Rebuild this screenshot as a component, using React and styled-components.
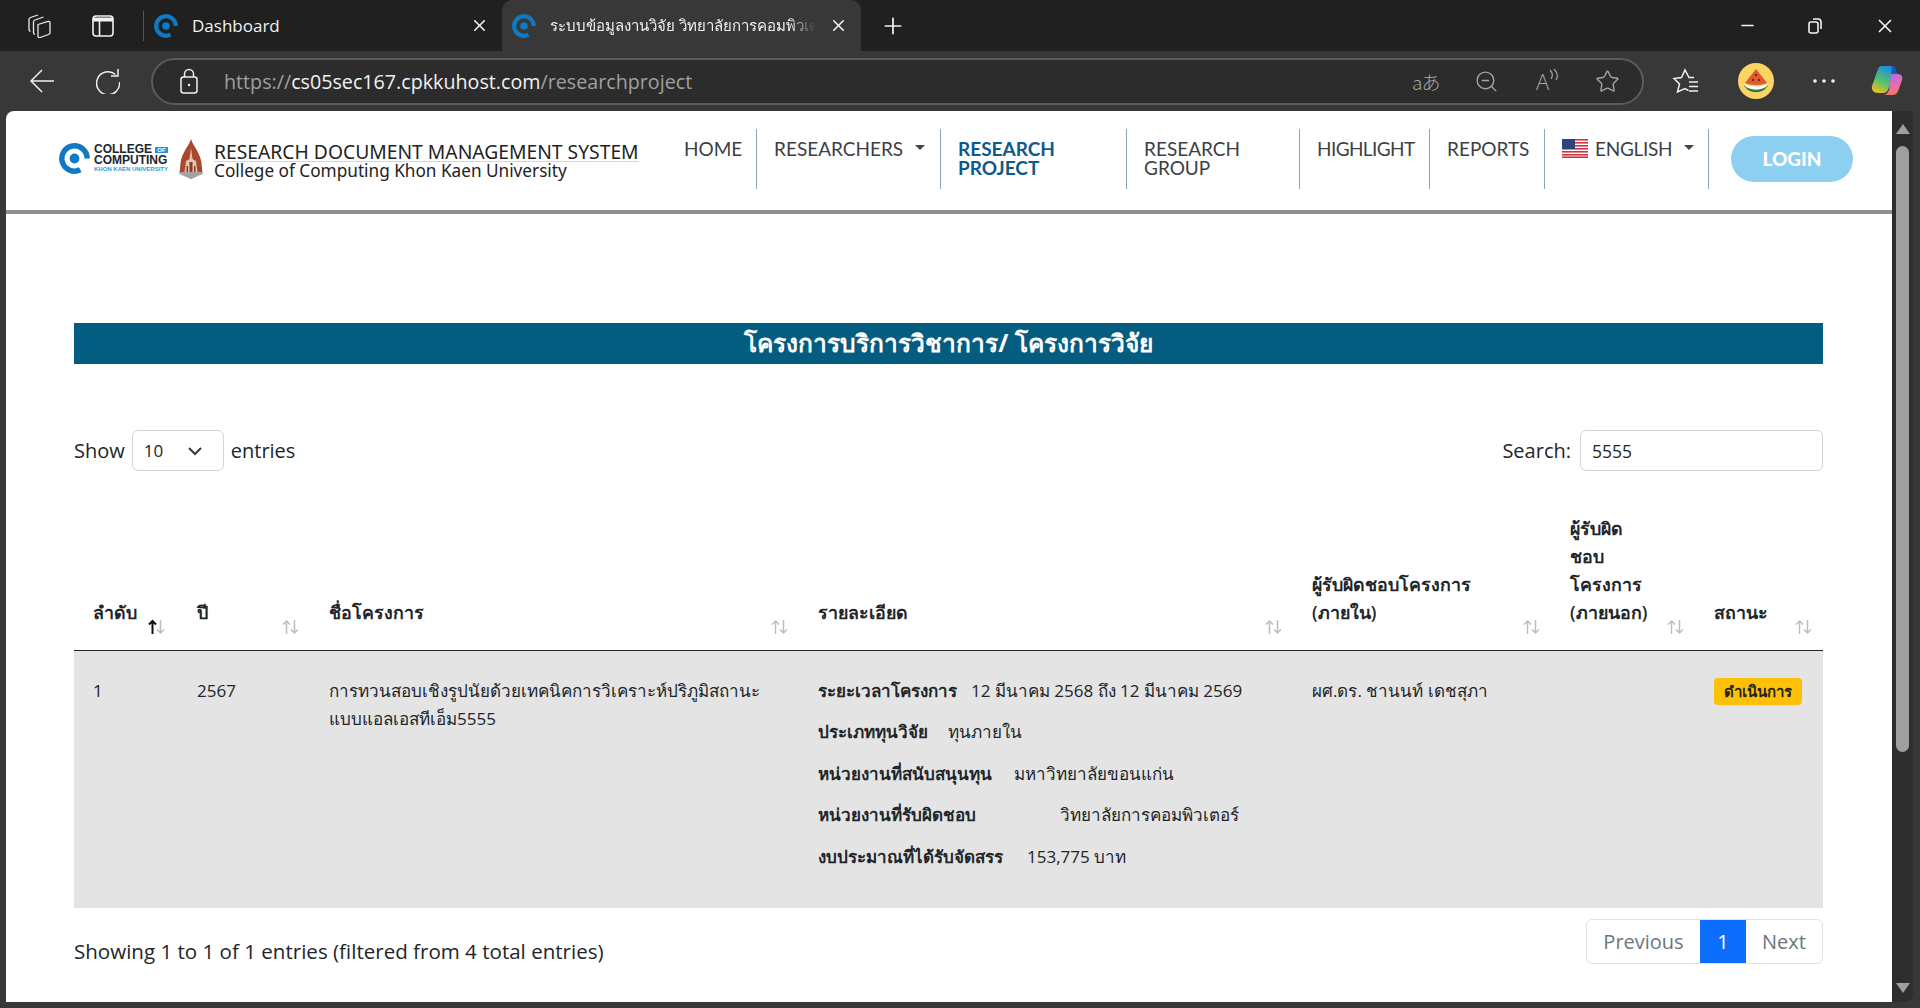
import React from 'react';
import styled, { createGlobalStyle } from 'styled-components';
import { Plus, X, Minus, Star, ZoomOut } from 'lucide-react';

const GlobalStyle = createGlobalStyle`
    html, body { margin: 0; padding: 0; background: #383838; }
    * { box-sizing: border-box; }
    body { font-family: "Open Sans", "Noto Sans", sans-serif; }
`;

const Mark = function Mark({ size = 24 }) {
    return (
        <svg width={size} height={size} viewBox="0 0 24 24" fill="none">
            <path d="M21.800 12 A9.800 9.800 0 1 0 16.500 20.700" stroke="#0f79c4" strokeWidth="4.200" />
            <circle cx="12" cy="12" r="3.800" fill="#0f79c4" />
        </svg>
    );
};

const Emblem = function Emblem() {
    return (
        <svg width="24" height="40" viewBox="0 0 24 40">
            <path d="M12 0 C14 7 21 13 22.500 24 L23.500 34 L12 40 L0.500 34 L1.500 24 C3 13 10 7 12 0Z" fill="#a9492c" />
            <path d="M12 9 L13.500 20 L17 22 L18.500 33 L5.500 33 L7 22 L10.500 20Z" fill="#dcc3b4" />
            <path d="M10.500 23h3v10h-3zM7.500 27h1.500v6H7.500zM15 27h1.500v6H15z" fill="#8a3c25" />
            <path d="M0.500 33 L23.500 33 L23.500 35 L12 40 L0.500 35Z" fill="#a3a3a3" />
        </svg>
    );
};

const Flag = function Flag() {
    return (
        <svg width="26" height="19" viewBox="0 0 26 19">
            <rect width="26" height="19" fill="#fff" />
            {[0, 3, 6, 9, 12, 15].map((y) => <rect key={y} y={y} width="26" height="1.600" fill="#d0343f" />)}
            <rect y="17.400" width="26" height="1.600" fill="#d0343f" />
            <rect width="13" height="10" fill="#33407c" />
        </svg>
    );
};

const SortIcon = function SortIcon({ active }) {
    return (
        <svg width="19" height="16" viewBox="0 0 19 16" fill="none">
            <path d="M5.500 15V2M2 5.500l3.500-3.500 3.500 3.500" stroke={active ? '#111' : '#bdbdbd'} strokeWidth={active ? 2 : 1.500} />
            <path d="M13.500 1v13M10 10.500l3.500 3.500 3.500-3.500" stroke="#bdbdbd" strokeWidth="1.500" />
        </svg>
    );
};

const columns = [
    { title: 'ลำดับ', width: 104, active: true },
    { title: 'ปี', width: 132 },
    { title: 'ชื่อโครงการ', width: 489 },
    { title: 'รายละเอียด', width: 494 },
    { title: <>ผู้รับผิดชอบโครงการ<br />(ภายใน)</>, width: 258 },
    { title: <>ผู้รับผิด<br />ชอบ<br />โครงการ<br />(ภายนอก)</>, width: 144 },
    { title: 'สถานะ', width: 128 },
];

const details = [
    { label: 'ระยะเวลาโครงการ', value: '12 มีนาคม 2568 ถึง 12 มีนาคม 2569', width: 153 },
    { label: 'ประเภททุนวิจัย', value: 'ทุนภายใน', width: 130 },
    { label: 'หน่วยงานที่สนับสนุนทุน', value: 'มหาวิทยาลัยขอนแก่น', width: 196 },
    { label: 'หน่วยงานที่รับผิดชอบ', value: 'วิทยาลัยการคอมพิวเตอร์', width: 242 },
    { label: 'งบประมาณที่ได้รับจัดสรร', value: '153,775 บาท', width: 209 },
];

const navItems = [
    { label: 'HOME', width: 90 },
    { label: 'RESEARCHERS', width: 184, caret: true },
    { label: <>RESEARCH<br />PROJECT</>, width: 186, current: true },
    { label: <>RESEARCH<br />GROUP</>, width: 173 },
    { label: 'HIGHLIGHT', width: 130, tracking: -0.6 },
    { label: 'REPORTS', width: 115 },
    { label: 'ENGLISH', width: 164, caret: true, flag: true, tracking: -0.3 },
];

const App = function App() {
    return (
        <Window>
            <GlobalStyle />
            <TabBar>
                <Workspaces>
                    <svg width="24" height="24" viewBox="0 0 24 24" fill="none" stroke="#e8e8e8" strokeWidth="1.300">
                        <path d="M11 10.500 L21 7.500 Q23 7 23 9 V18.500 Q23 20 21.500 20.500 L13 23.500 Q11 24 11 22 Z" />
                        <path d="M8 20.500 Q6.500 20 6.500 18.500 V8 Q6.500 6.500 8 6 L16.500 3" />
                        <path d="M3.500 17.500 Q2 17 2 15.500 V5.500 Q2 4 3.500 3.500 L11 1" />
                    </svg>
                </Workspaces>
                <VerticalTabs>
                    <svg width="22" height="22" viewBox="0 0 22 22" fill="none" stroke="#f2f2f2" strokeWidth="1.600">
                        <rect x="1" y="1" width="20" height="20" rx="3" />
                        <path d="M1 4.500h20" strokeWidth="4" />
                        <path d="M7.500 5v16" />
                    </svg>
                </VerticalTabs>
                <TabDivider />
                <Tab>
                    <Mark size={24} />
                    <TabTitle>Dashboard</TabTitle>
                    <X size={19} color="#f2f2f2" />
                </Tab>
                <Tab $active>
                    <Mark size={24} />
                    <TabTitle $thai>ระบบข้อมูลงานวิจัย วิทยาลัยการคอมพิวเตอร์</TabTitle>
                    <X size={19} color="#f2f2f2" />
                </Tab>
                <NewTab><Plus size={26} color="#f2f2f2" strokeWidth={1.600} /></NewTab>
                <WindowButtons>
                    <Minus size={19} color="#f2f2f2" />
                    <svg width="19" height="19" viewBox="0 0 19 19" fill="none" stroke="#f2f2f2" strokeWidth="1.600">
                        <rect x="3" y="6" width="9" height="11" rx="2" />
                        <path d="M7 3h5a3 3 0 0 1 3 3v7" />
                    </svg>
                    <X size={22} color="#f2f2f2" strokeWidth={1.800} />
                </WindowButtons>
            </TabBar>

            <Toolbar>
                <BackIcon>
                    <svg width="24" height="24" viewBox="0 0 24 24" fill="none" stroke="#f0f0f0" strokeWidth="1.500">
                        <path d="M24 12H1M12 1 1 12l11 11" />
                    </svg>
                </BackIcon>
                <svg width="24" height="26" viewBox="0 0 24 26" fill="none" stroke="#f0f0f0" strokeWidth="1.500">
                    <path d="M19.500 6.500A11.500 11.500 0 1 0 23.500 14" />
                    <path d="M22 1v7h-7" />
                </svg>
                <AddressBar>
                    <svg width="18" height="26" viewBox="0 0 18 26" fill="none" stroke="#f0f0f0" strokeWidth="1.500">
                        <rect x="1" y="9" width="16" height="16" rx="2.500" />
                        <path d="M4.500 9V6a4.500 4.500 0 0 1 9 0v3" />
                        <circle cx="9" cy="17" r="1.200" fill="#f0f0f0" stroke="none" />
                    </svg>
                    <Url>https://<b>cs05sec167.cpkkuhost.com</b>/researchproject</Url>
                    <AddressIcons>
                        <TranslateGlyph>aあ</TranslateGlyph>
                        <ZoomOut size={25} color="#a6a6a6" strokeWidth={1.300} />
                        <ReadGlyph>A<svg width="10" height="14" viewBox="0 0 10 14" fill="none" stroke="#a6a6a6" strokeWidth="1.200"><path d="M1 1c3 3 3 6 1 9M5 0c4 4 4 8 2 11" /></svg></ReadGlyph>
                        <Star size={25} color="#a6a6a6" strokeWidth={1.300} />
                    </AddressIcons>
                </AddressBar>
                <RightTools>
                    <svg width="28" height="28" viewBox="0 0 28 28" fill="none" stroke="#f0f0f0" strokeWidth="1.500">
                        <path d="M22 10.500H17L13 3 9.500 10.500 2 11.500 7.500 17 5.500 25 13 21.500 16.500 23.500" />
                        <path d="M17 15h9M17 19.500h9M17 24h9" />
                    </svg>
                    <Avatar>
                        <svg width="30" height="30" viewBox="0 0 30 30">
                            <path d="M15 3 26 17c-5 2.500-17 2.500-22 0Z" fill="#e2592b" />
                            <path d="M2.500 17.500c4 9 21 9 25 0c-6 4-19 4-25 0Z" fill="#fff" />
                            <path d="M2.500 18c4 11 21 11 25 0c-4 7.500-21 7.500-25 0Z" fill="#237a3d" />
                            <circle cx="15" cy="9" r="1" fill="#222" /><circle cx="12" cy="14" r="1" fill="#222" /><circle cx="18" cy="14" r="1" fill="#222" />
                        </svg>
                    </Avatar>
                    <svg width="24" height="6" viewBox="0 0 24 6" fill="#f0f0f0">
                        <circle cx="3" cy="3" r="1.800" /><circle cx="12" cy="3" r="1.800" /><circle cx="21" cy="3" r="1.800" />
                    </svg>
                    <CopilotIcon width="34" height="34" viewBox="0 0 34 34" fill="none">
                        <defs>
                            <linearGradient id="cpA" x1="0.600" y1="0" x2="0.200" y2="1"><stop offset="0" stopColor="#1c8fe0" /><stop offset=".55" stopColor="#52c26b" /><stop offset="1" stopColor="#f5c21b" /></linearGradient>
                            <linearGradient id="cpB" x1="0.300" y1="0" x2="0.700" y2="1"><stop offset="0" stopColor="#a96ae6" /><stop offset=".6" stopColor="#e86fb0" /><stop offset="1" stopColor="#f4793f" /></linearGradient>
                        </defs>
                        <path d="M12 2h10c2 0 3 1 3.500 3L18 26c-1 2-2.500 3-4.500 3H8C4 29 1 26 2 22L8 5c.5-2 2-3 4-3Z" fill="url(#cpA)" />
                        <path d="M22 2c2 0 3 1 3.500 3L28 11h-7Z" fill="#1a56c4" />
                        <path d="M21 10h7c3.500 0 5 3 4 6l-3.500 10c-1 3-3 5-6 5H13c3 0 5-2 6-5Z" fill="url(#cpB)" />
                    </CopilotIcon>
                </RightTools>
            </Toolbar>

            <Viewport>
                <Page>
                    <Navbar>
                        <Brand>
                            <CollegeLogo>
                                <Mark size={31} />
                                <CollegeText>
                                    <span>COLLEGE <Of>OF</Of></span>
                                    <span>COMPUTING</span>
                                    <small>KHON KAEN UNIVERSITY</small>
                                </CollegeText>
                            </CollegeLogo>
                            <Emblem />
                            <BrandText>
                                <BrandTitle>RESEARCH DOCUMENT MANAGEMENT SYSTEM</BrandTitle>
                                <BrandSub>College of Computing Khon Kaen University</BrandSub>
                            </BrandText>
                        </Brand>
                        <NavList>
                            {navItems.map((item, i) => (
                                <NavItem key={i} $width={item.width} $current={item.current} $tracking={item.tracking}>
                                    {item.flag && <Flag />}
                                    <span>{item.label}</span>
                                    {item.caret && <Caret />}
                                </NavItem>
                            ))}
                        </NavList>
                        <LoginButton>LOGIN</LoginButton>
                    </Navbar>

                    <Main>
                        <TitleBar>โครงการบริการวิชาการ/ โครงการวิจัย</TitleBar>
                        <Controls>
                            <ControlGroup>
                                Show
                                <PageSize>
                                    10
                                    <svg width="16" height="16" viewBox="0 0 16 16" fill="none" stroke="#343a40" strokeWidth="2"><path d="M2 5l6 6 6-6" /></svg>
                                </PageSize>
                                entries
                            </ControlGroup>
                            <ControlGroup>
                                Search:
                                <SearchBox>5555</SearchBox>
                            </ControlGroup>
                        </Controls>

                        <Table>
                            <colgroup>
                                {columns.map((c, i) => <col key={i} width={c.width} />)}
                            </colgroup>
                            <thead>
                                <tr>
                                    {columns.map((c, i) => (
                                        <Th key={i}>
                                            {c.title}
                                            <SortSlot $active={c.active}><SortIcon active={c.active} /></SortSlot>
                                        </Th>
                                    ))}
                                </tr>
                            </thead>
                            <tbody>
                                <tr>
                                    <Td>1</Td>
                                    <Td>2567</Td>
                                    <Td>การทวนสอบเชิงรูปนัยด้วยเทคนิคการวิเคราะห์ปริภูมิสถานะ<br />แบบแอลเอสทีเอ็ม5555</Td>
                                    <Td>
                                        {details.map((d) => (
                                            <DetailRow key={d.label}>
                                                <DetailLabel $width={d.width}>{d.label}</DetailLabel>
                                                <span>{d.value}</span>
                                            </DetailRow>
                                        ))}
                                    </Td>
                                    <Td>ผศ.ดร. ชานนท์ เดชสุภา</Td>
                                    <Td />
                                    <Td><Badge>ดำเนินการ</Badge></Td>
                                </tr>
                            </tbody>
                        </Table>

                        <Footer>
                            <Info>Showing 1 to 1 of 1 entries (filtered from 4 total entries)</Info>
                            <Pagination>
                                <PageLink $width={113}>Previous</PageLink>
                                <PageLink $width={46} $active>1</PageLink>
                                <PageLink $width={76}>Next</PageLink>
                            </Pagination>
                        </Footer>
                    </Main>
                </Page>
                <Scrollbar>
                    <ScrollArrow />
                    <ScrollThumb />
                    <ScrollArrow $down />
                </Scrollbar>
            </Viewport>
        </Window>
    );
};

const Window = styled.div`
    width: 1920px;
    height: 1008px;
    overflow: hidden;
    display: flex;
    flex-direction: column;
    background: #383838;
`;
const TabBar = styled.div`
    height: 51px;
    flex: none;
    display: flex;
    align-items: center;
    background: #202020;
    padding-left: 27px;
`;
const Workspaces = styled.div`
    display: flex;
    margin-right: 41px;
`;
const VerticalTabs = styled.div`
    display: flex;
    margin-right: 29px;
`;
const TabDivider = styled.div`
    width: 1px;
    height: 30px;
    background: #555;
`;
const Tab = styled.div`
    width: ${(p) => (p.$active ? 359 : 358)}px;
    height: 51px;
    flex: none;
    display: flex;
    align-items: center;
    gap: 14px;
    padding: 0 13px 0 10px;
    border-radius: 10px 10px 0 0;
    background: ${(p) => (p.$active ? '#383838' : 'transparent')};
`;
const TabTitle = styled.span`
    flex: 1;
    overflow: hidden;
    white-space: nowrap;
    color: #f2f2f2;
    font-size: ${(p) => (p.$thai ? '15px' : '17px')};
    ${(p) => p.$thai && 'mask-image: linear-gradient(to right, #000 90%, transparent);'}
`;
const NewTab = styled.div`
    margin-left: 19px;
    display: flex;
`;
const WindowButtons = styled.div`
    margin-left: auto;
    display: flex;
    align-items: center;
    gap: 49px;
    padding-right: 24px;
`;
const Toolbar = styled.div`
    height: 60px;
    flex: none;
    display: flex;
    align-items: center;
    background: #383838;
    padding-left: 30px;
`;
const BackIcon = styled.div`
    display: flex;
    margin-right: 42px;
`;
const AddressBar = styled.div`
    width: 1493px;
    height: 47px;
    margin-left: 31px;
    display: flex;
    align-items: center;
    border: 2px solid #5c5c5c;
    border-radius: 24px;
    background: #2c2c2c;
    padding: 0 22px 0 27px;
`;
const Url = styled.div`
    margin-left: 26px;
    color: #a0a0a0;
    font-size: 19.700px;
    b { font-weight: 400; color: #f2f2f2; }
`;
const AddressIcons = styled.div`
    margin-left: auto;
    display: flex;
    align-items: center;
    gap: 34px;
    color: #a6a6a6;
`;
const TranslateGlyph = styled.span`
    width: 28px;
    font-family: "Noto Sans CJK JP", "Noto Sans", sans-serif;
    font-size: 19px;
    font-weight: 300;
    letter-spacing: -1px;
    white-space: nowrap;
`;
const ReadGlyph = styled.span`
    width: 28px;
    padding-left: 3px;
    display: flex;
    align-items: flex-start;
    font-size: 22px;
    font-weight: 300;
    line-height: 24px;
`;
const RightTools = styled.div`
    display: flex;
    align-items: center;
    margin-left: 28px;
    gap: 38px;
`;
const CopilotIcon = styled.svg`
    margin-left: -4px;
`;
const Avatar = styled.div`
    width: 36px;
    height: 36px;
    border-radius: 50%;
    background: #fbd463;
    display: flex;
    align-items: center;
    justify-content: center;
`;
const Viewport = styled.div`
    flex: 1;
    min-height: 0;
    display: flex;
    padding: 0 7px 6px 6px;
`;
const Page = styled.div`
    width: 1886px;
    background: #fff;
    border-top-left-radius: 8px;
    overflow: hidden;
`;
const Scrollbar = styled.div`
    flex: 1;
    background: #2e2e2e;
    border-bottom-right-radius: 8px;
    display: flex;
    flex-direction: column;
    align-items: center;
    padding: 13px 0 9px;
`;
const ScrollArrow = styled.div`
    width: 0;
    height: 0;
    border-left: 7px solid transparent;
    border-right: 7px solid transparent;
    ${(p) => (p.$down ? 'border-top: 10px solid #9f9f9f; margin-top: auto;' : 'border-bottom: 10px solid #9f9f9f;')}
`;
const ScrollThumb = styled.div`
    width: 13px;
    height: 606px;
    margin-top: 12px;
    border-radius: 7px;
    background: #9f9f9f;
`;
const Navbar = styled.nav`
    height: 103px;
    display: flex;
    align-items: flex-start;
    border-bottom: 4px solid #909090;
    padding-left: 53px;
`;
const Brand = styled.div`
    width: 608px;
    flex: none;
    height: 95px;
    display: flex;
    align-items: center;
`;
const CollegeLogo = styled.div`
    display: flex;
    align-items: center;
    gap: 4px;
    margin-right: 11px;
`;
const CollegeText = styled.div`
    display: flex;
    flex-direction: column;
    font-family: "Liberation Sans", Arial, sans-serif;
    font-weight: 700;
    font-size: 12px;
    line-height: 10px;
    color: #20262d;
    small {
        font-size: 6px;
        line-height: 9px;
        color: #2a9ddc;
        white-space: nowrap;
    }
`;
const Of = styled.span`
    background: #2c8fd6;
    color: #fff;
    font-size: 6px;
    padding: 0 2px;
    vertical-align: 1px;
`;
const BrandText = styled.div`
    margin: 6px 0 0 11px;
    color: #222;
    font-family: "Noto Sans", sans-serif;
`;
const BrandTitle = styled.div`
    font-size: 19.300px;
    line-height: 18px;
    white-space: nowrap;
    border-bottom: 1px solid #d6d6d6;
`;
const BrandSub = styled.div`
    font-size: 17.200px;
    line-height: 18px;
    white-space: nowrap;
`;
const NavList = styled.div`
    display: flex;
    margin-top: 18px;
`;
const NavItem = styled.div`
    width: ${(p) => p.$width}px;
    height: 60px;
    padding: 9.500px 0 0 17px;
    display: flex;
    align-items: flex-start;
    gap: 7px;
    border-right: 1px solid #8fa5bb;
    font-family: "Lato", sans-serif;
    font-size: 19px;
    line-height: 19px;
    letter-spacing: ${(p) => p.$tracking || 0}px;
    font-weight: ${(p) => (p.$current ? 700 : 400)};
    color: ${(p) => (p.$current ? '#0e5a8a' : '#3d3f45')};
`;
const Caret = styled.i`
    margin: 6px 0 0 5px;
    width: 0;
    height: 0;
    border-left: 5px solid transparent;
    border-right: 5px solid transparent;
    border-top: 5px solid #444;
`;
const LoginButton = styled.button`
    width: 122px;
    height: 46px;
    margin: 25px 0 0 22px;
    padding: 0 0 2px;
    border: none;
    border-radius: 23px;
    background: #8ccff0;
    color: #fff;
    font-family: "Lato", sans-serif;
    font-size: 19px;
    font-weight: 900;
`;
const Main = styled.main`
    padding: 109px 69px 0 68px;
`;
const TitleBar = styled.h1`
    margin: 0;
    height: 41px;
    background: #045d80;
    color: #fff;
    text-align: center;
    font-size: 24.500px;
    line-height: 40px;
    font-weight: 700;
`;
const Controls = styled.div`
    margin-top: 66px;
    display: flex;
    justify-content: space-between;
`;
const ControlGroup = styled.div`
    display: flex;
    align-items: center;
    gap: 7px;
    font-size: 20px;
    color: #212529;
`;
const PageSize = styled.div`
    width: 92px;
    height: 41px;
    display: flex;
    align-items: center;
    justify-content: space-between;
    padding: 0 20px 0 11px;
    border: 1px solid #ced4da;
    border-radius: 6px;
    font-size: 17px;
`;
const SearchBox = styled.div`
    width: 243px;
    height: 41px;
    margin-left: 2px;
    padding: 0 11px;
    display: flex;
    align-items: center;
    border: 1px solid #ced4da;
    border-radius: 6px;
    font-size: 17.500px;
`;
const Table = styled.table`
    width: 1749px;
    margin-top: 33px;
    table-layout: fixed;
    border-collapse: collapse;
`;
const Th = styled.th`
    position: relative;
    padding: 10px 18px 24px 19px;
    vertical-align: bottom;
    text-align: left;
    font-size: 17.800px;
    line-height: 28px;
    font-weight: 600;
    color: #212529;
    border-bottom: 1px solid #212529;
`;
const SortSlot = styled.span`
    position: absolute;
    right: ${(p) => (p.$active ? 12 : 10)}px;
    bottom: 15px;
    display: flex;
`;
const Td = styled.td`
    padding: 26px 18px 23px 19px;
    height: 257px;
    vertical-align: top;
    background: #e4e4e4;
    font-size: 17px;
    line-height: 28px;
    color: #212529;
    border-bottom: 1px solid #dee2e6;
`;
const DetailRow = styled.div`
    display: flex;
    height: 41.400px;
    white-space: nowrap;
`;
const DetailLabel = styled.span`
    width: ${(p) => p.$width}px;
    font-size: 17px;
    font-weight: 600;
`;
const Badge = styled.span`
    display: inline-block;
    height: 27px;
    padding: 0 10px;
    border-radius: 4px;
    background: #ffc107;
    font-size: 15px;
    line-height: 27px;
    font-weight: 600;
    white-space: nowrap;
`;
const Footer = styled.div`
    margin-top: 11px;
    display: flex;
    justify-content: space-between;
    align-items: flex-start;
`;
const Info = styled.div`
    padding-top: 18px;
    font-size: 20.550px;
    line-height: 28px;
    color: #212529;
`;
const Pagination = styled.div`
    display: flex;
    height: 45px;
    border: 1px solid #dee2e6;
    border-radius: 6px;
`;
const PageLink = styled.div`
    width: ${(p) => p.$width}px;
    text-align: center;
    line-height: 43px;
    font-size: 20px;
    color: ${(p) => (p.$active ? '#fff' : '#6c757d')};
    background: ${(p) => (p.$active ? '#0d6efd' : 'transparent')};
`;

export default App;
